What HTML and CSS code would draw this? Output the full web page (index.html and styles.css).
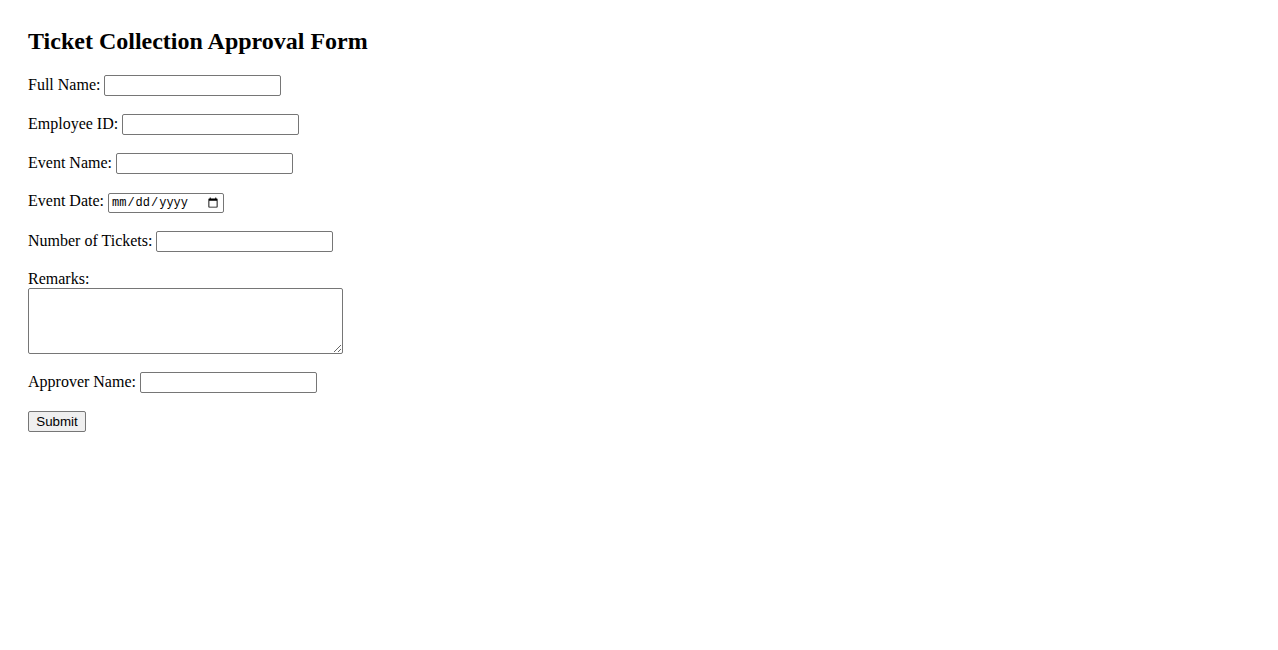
FILE: index.html
```html
<!DOCTYPE html>
<html>
<head>
<meta charset="utf-8">
<title>Ticket Collection Approval Form</title>
<link rel="stylesheet" href="styles.css">
</head>
<body>
<h2 class="title">Ticket Collection Approval Form</h2>
<form class="form">
  <div class="field">
    <label for="fullName">Full Name:</label>
    <input class="text" type="text" id="fullName">
  </div>
  <div class="field">
    <label for="empId">Employee ID:</label>
    <input class="text" type="text" id="empId">
  </div>
  <div class="field">
    <label for="eventName">Event Name:</label>
    <input class="text" type="text" id="eventName">
  </div>
  <div class="field">
    <label for="eventDate">Event Date:</label>
    <input class="date" type="date" id="eventDate">
  </div>
  <div class="field">
    <label for="tickets">Number of Tickets:</label>
    <input class="text" type="number" id="tickets">
  </div>
  <div class="field-stack">
    <label class="block-label" for="remarks">Remarks:</label>
    <textarea class="remarks" id="remarks"></textarea>
  </div>
  <div class="field">
    <label for="approver">Approver Name:</label>
    <input class="text" type="text" id="approver">
  </div>
  <div class="actions">
    <button class="submit" type="submit">Submit</button>
  </div>
</form>
</body>
</html>
```
FILE: styles.css
```css
html, body {
  background: #ffffff;
}
body {
  margin: 0;
  padding: 28px;
  font-family: "Liberation Serif", "Times New Roman", serif;
  font-size: 16px;
  color: #000000;
}
.title {
  margin: 0 0 21px 0;
  font-size: 24px;
  line-height: 26px;
  font-weight: bold;
}
.form {
  margin: 0;
}
.field {
  display: flex;
  align-items: baseline;
  gap: 4px;
  margin-bottom: 18px;
}
.field label {
  line-height: 18px;
}
.text, .date, .remarks {
  box-sizing: border-box;
  border: 1px solid #767676;
  border-radius: 2px;
  background: #ffffff;
  margin: 0;
  font-family: "Liberation Sans", Arial, sans-serif;
  font-size: 13.333px;
}
.text {
  width: 177px;
  height: 21px;
  padding: 1px 2px;
}
.text[type="number"]::-webkit-inner-spin-button,
.text[type="number"]::-webkit-outer-spin-button {
  -webkit-appearance: none;
  margin: 0;
}
.date {
  width: 116px;
  height: 20px;
  padding: 0 2px;
  font-family: "Liberation Mono", "DejaVu Sans Mono", monospace;
  font-size: 12px;
  color: #000000;
}
.field-stack {
  margin-bottom: 18px;
}
.block-label {
  display: block;
  line-height: 18px;
}
.remarks {
  display: block;
  width: 315px;
  height: 66px;
  padding: 2px;
  resize: both;
}
.actions {
  margin: 0;
}
.submit {
  box-sizing: border-box;
  width: 58px;
  height: 21px;
  padding: 1px 6px;
  margin: 0;
  border: 1px solid #767676;
  border-radius: 2px;
  background: #efefef;
  font-family: "Liberation Sans", Arial, sans-serif;
  font-size: 13.333px;
  color: #000000;
}
```
